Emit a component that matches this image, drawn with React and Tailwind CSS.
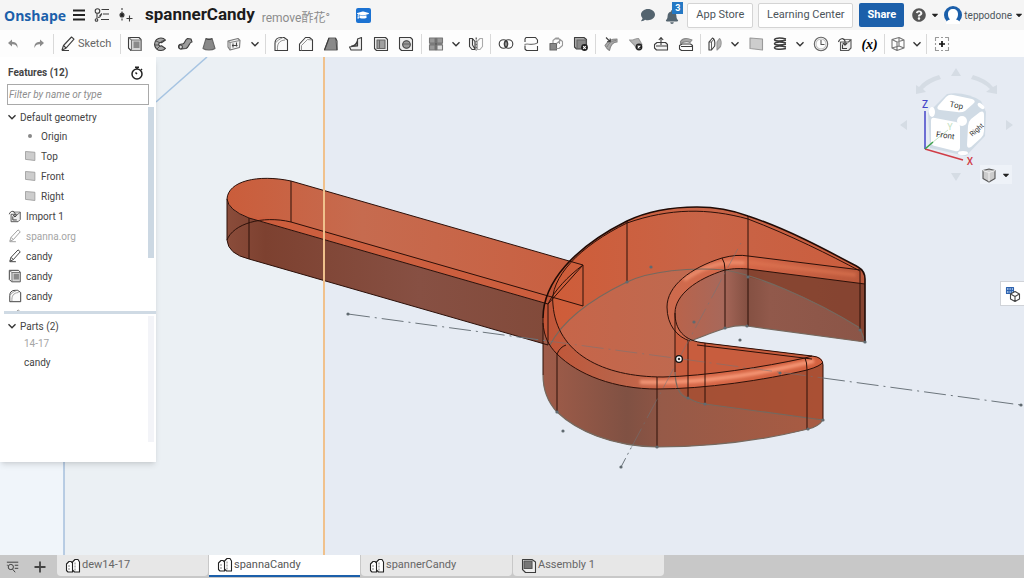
import { FaBell, FaComment, FaQuestionCircle, FaCaretDown, FaGraduationCap } from "react-icons/fa";

const Icon = ({ children, className = "size-4" }) => (
  <svg
    viewBox="0 0 16 16"
    className={`${className} shrink-0`}
    fill="none"
    stroke="#3d3d3d"
    strokeWidth="1.100"
    strokeLinejoin="round"
    aria-hidden="true"
  >
    {children}
  </svg>
);

const icons = {
  undo: (
    <path d="M7 3.500 3 7l4 3.500V8.300c2.500-.2 4.500.6 5.500 3.700.5-4-1.500-6.200-5.500-6.300Z" fill="#8b8b8b" stroke="none" />
  ),
  redo: (
    <path d="M8 3.500 12 7l-4 3.500V8.300c-2.500-.2-4.500.6-5.500 3.700C2 8 4 5.800 8 5.700Z" fill="#8b8b8b" stroke="none" />
  ),
  pencil: (
    <>
      <path d="M3.500 9.500 11.500 1l2.500 2.200-8 9L2 14Z" />
      <path d="m3.500 9.500 2.500 2.500M2 14.500h7" />
    </>
  ),
  extrude: (
    <>
      <path d="M1.500 1.500h10.500l2 2v11H4l-2.500-2.500Z" fill="#f2f2f2" />
      <path d="M4.500 4h9.500v10.500H4.500ZM1.500 1.500l3 2.500" fill="#d5d5d5" stroke="#777" />
      <path d="M6.500 5.500h6v6.500h-6Z" fill="#8a8a8a" stroke="none" />
    </>
  ),
  revolve: (
    <>
      <path d="M13.500 4A6.300 6.300 0 1 0 13.500 12.500L9.500 9.700a1.800 1.800 0 1 1 0-3Z" fill="#a8a8a8" />
      <path d="M13 4 9 5.500M4 5l3.500 1.500M2.500 9h4.500M5 13l3-3" strokeWidth=".8" />
    </>
  ),
  sweep: (
    <>
      <path d="M1.500 10.500c0-2 2-2.700 4-2.500 2.500 0 2-4 5-5.500l3.500.5 1 3c-3 0-2.500 5-6 6.500l-4.500.5c-2 0-3-1-3-2.500Z" fill="#9c9c9c" />
      <ellipse cx="3.700" cy="11" rx="1.700" ry="2" fill="#ddd" />
    </>
  ),
  loft: (
    <>
      <path d="M5 2.500h6l3 10c-3 2-9 2-12 0Z" fill="#888" stroke="#666" />
      <path d="M5 2.500c1 1.300 5 1.300 6 0" fill="#ddd" />
    </>
  ),
  thicken: (
    <>
      <path d="M2 5 12 2.500 14 4.500l-.5 7L4 14l-2-3Z" fill="#f2f2f2" stroke="#777" />
      <path d="M2 5l2 1.500L14 4.500M4 6.500V14" stroke="#888" />
      <path d="M7 7.500v4M10.500 6.500v4M6 9.500h5.500" stroke="#444" />
    </>
  ),
  fillet: (
    <>
      <path d="M2 14.500V7.500c0-3.500 2-6 6-6h3l3.500 2.500v10.500Z" fill="#fafafa" />
      <path d="M4.500 14C4 8 6 4.500 12 4M2 7.500c2-3 5-4.500 8-6" stroke="#888" strokeWidth=".9" />
    </>
  ),
  chamfer: (
    <>
      <path d="M1.500 14.500V8l6-6.500h4l3 2.500v10.500Z" fill="#fafafa" />
      <path d="m3.500 9.500 6-6 4.500.5M3.500 9.500v5" stroke="#888" strokeWidth=".9" />
    </>
  ),
  draft: (
    <>
      <path d="M6 2h6.500l1.500 12H1.500Z" fill="#8a8a8a" stroke="#666" />
      <path d="m12.500 2 1.500 3V14M6 2 1.500 14" />
    </>
  ),
  rib: (
    <>
      <path d="M13.500 1.500v12.500H3L1.500 11l8-1.500V3Z" fill="#eee" />
      <path d="M9.500 4.500V10H3.500c3 0 5-2 6-5.500Z" fill="#888" />
    </>
  ),
  shell: (
    <>
      <path d="M1.500 1.500h11l2 2v11h-11l-2-2Z" fill="#eee" />
      <path d="M4 4h8v8.500H4Z" fill="#a0a0a0" stroke="#666" />
      <path d="M6.500 4v8.500" stroke="#666" />
    </>
  ),
  hole: (
    <>
      <path d="M1.500 1.500h11l2 2v11h-11l-2-2Z" fill="#eee" />
      <circle cx="8.500" cy="8.500" r="3.800" fill="#999" />
      <path d="M5 8h7" stroke="#666" />
    </>
  ),
  pattern: (
    <>
      <path d="M1.500 2h5.500v5H1.500ZM9 2h5.500v5H9ZM1.500 9h5.500v5H1.500Z" fill="#999" stroke="#777" />
      <path d="M9 9h5.500v5H9Z" fill="#ddd" stroke="#777" />
      <path d="M8 1.500v13M1.500 8h13" />
    </>
  ),
  mirror: (
    <>
      <path d="M1.500 2.500h3l2.500 3V13.500H4l-2.500-3ZM4.500 2.500V9l2.500 4" fill="#eee" />
      <path d="M9.500 5 12 2.500h2.500v8L12 13.500H9.500Z" stroke="#aaa" />
      <path d="M8.200 1.500v13" strokeDasharray="2 1" />
    </>
  ),
  boolean: (
    <>
      <path d="M8 4.500c2 2 2 5 0 7-2-2-2-5 0-7Z" fill="#999" />
      <circle cx="5.500" cy="8" r="4.300" />
      <circle cx="10.500" cy="8" r="4.300" />
    </>
  ),
  split: (
    <>
      <path d="M2 6V3l1-1.500h9.500L14.500 4v3M2 9.500V13l1.500 1.500h11V10" />
      <path d="M1.500 8.500c4-2 6 2 13-1.500" stroke="#777" />
    </>
  ),
  transform: (
    <>
      <path d="M2 7.500h6.500V14H2Z" fill="#888" stroke="#666" />
      <path d="M7.500 3h4l3 2.500v4L11 12.500H8.500M5 7V4.500l3-2.500h3M8.500 7.500 13 4M11.500 3v5" stroke="#999" />
    </>
  ),
  deletePart: (
    <>
      <path d="M1.500 1.500h9.500l2.500 2v9.500H3.500l-2-2Z" fill="#aaa" />
      <path d="M4 4h9v8.500H4Z" fill="#888" stroke="#666" />
      <circle cx="11.500" cy="11.500" r="3.400" fill="#222" stroke="none" />
      <path d="m10.200 10.200 2.600 2.600m0-2.600-2.600 2.600" stroke="#fff" />
    </>
  ),
  modifyFillet: (
    <>
      <path d="M2 9.500C5 4.500 8 3 14 3v3c-4 0-6.500 3-7.500 8.500L4 12.500Z" fill="#aaa" stroke="#888" />
      <path d="M4 11c2-4 4-6 9-6.500" stroke="#777" strokeWidth=".8" />
      <path d="m3 1.500 4 4M7.200 2.500v3.200H4" />
    </>
  ),
  deleteFace: (
    <>
      <path d="M1.500 4c4 1 6-2 9-1.500l3.500 6-5.500 4C7 8.500 4 7.500 1.500 4Z" fill="#b3b3b3" stroke="#999" />
      <circle cx="11" cy="11" r="3.400" fill="#222" stroke="none" />
      <path d="m9.700 9.700 2.600 2.600m0-2.600-2.600 2.600" stroke="#fff" />
    </>
  ),
  moveFace: (
    <>
      <path d="M1.500 8.500 4 6.500h8.500l2 2V14H3.500l-2-2Z" fill="#f4f4f4" />
      <path d="M3 10h11.500M8 9V2M5.800 4 8 1.500 10.200 4" />
    </>
  ),
  replaceFace: (
    <>
      <path d="M2.500 5.500c3-4.500 7-3.500 11.500-1.500l-2 2.500c-3.500-2-6-1-9.500 1Z" fill="#aaa" stroke="#888" />
      <path d="M1.500 9.500 4 8h8.500l2 1.500v5H3.500l-2-1.500ZM3 10.500h11.500" />
    </>
  ),
  offset: (
    <>
      <path d="M2 6 5.500 2c2.200 1 2.700 4 2.200 8L4.500 14H2Z" fill="#fafafa" />
      <path d="M2 6h2.500v8M4.500 6 7 3" strokeWidth=".8" />
      <path d="M10 6 12.500 2.500c2 2 2 5 1 8L10 14Z" fill="#b5b5b5" stroke="#999" />
    </>
  ),
  plane: <path d="M2 2 14.500 3v11L2 12.500Z" fill="#cdcdcd" stroke="#9a9a9a" />,
  helix: (
    <path
      d="M14 3C8 1.500 2.500 2 2.500 3.700s6.500 1.500 11.500.6M14 7C8 5.500 2.500 6 2.500 7.700s6.500 1.500 11.500.6M14 11c-6-1.500-11.500-1-11.500.7s6.500 2 11.500.8"
      strokeWidth="1.500"
    />
  ),
  clock: (
    <>
      <circle cx="8" cy="8" r="6.700" stroke="#666" />
      <circle cx="8" cy="8" r="5" stroke="#aaa" strokeWidth=".8" />
      <path d="M8 4v4.500h3.500" stroke="#555" />
    </>
  ),
  derived: (
    <>
      <path d="M3.500 6h8l2.500-2.500v8.500l-2.500 2.500h-8Z" fill="#eee" stroke="#555" />
      <path d="M6 3.500h8" stroke="#777" />
      <path d="M1.500 6C2.500 2 7 1.500 8 5v3.500M5.800 7 8 9.200 10.200 7M5.500 8.500v4H10" />
    </>
  ),
  frame: (
    <path
      d="m2 3.500 7-2 5 2.500v8l-7 2.500L2 12ZM2 3.500l5 2.500 7-2M7 6v8.500M9 1.500V10l-7 2M9 10l5 2"
      stroke="#777"
    />
  ),
  add: (
    <>
      <path d="M1.500 5V1.500H5M11 1.500h3.500V5M14.500 11v3.500H11M5 14.500H1.500V11M7 1.500h2M7 14.500h2M1.500 7v2M14.500 7v2" stroke="#999" />
      <path d="M8 5v6M5 8h6" strokeWidth="1.700" stroke="#111" />
    </>
  ),
  parts: (
    <>
      <path d="M1.500 6 4 3.500h2L7.500 5v9H3l-1.500-1.500ZM7.500 4 10 1.500h3L14.500 4v10H9.500l-2-2Z" stroke="#222" fill="#fff" />
      <path d="M4 7v6M10 4.500V13" strokeDasharray="2 1" stroke="#666" strokeWidth=".8" />
    </>
  ),
  assembly: (
    <>
      <path d="M1.500 1.500h9.500l3.500 2.500v10.500H4.500l-3-3Z" fill="#eee" />
      <path d="M3 3h8v7.500H3Z" fill="#777" stroke="#555" />
    </>
  ),
};

const toolGroups = [
  { width: "w-[145px]", tools: ["extrude", "revolve", "sweep", "loft", "thicken", "more"] },
  { width: "w-[156px]", tools: ["fillet", "chamfer", "draft", "rib", "shell", "hole"] },
  { width: "w-[69px]", tools: ["pattern", "more", "mirror"] },
  { width: "w-[105px]", tools: ["boolean", "split", "transform", "deletePart"] },
  { width: "w-[105px]", tools: ["modifyFillet", "deleteFace", "moveFace", "replaceFace"] },
  { width: "w-[184px]", tools: ["offset", "more", "plane", "helix", "more", "clock", "derived", "variable"] },
  { width: "w-[42px]", tools: ["frame", "more"] },
  { width: "w-[30px]", tools: ["add"] },
];

const Chevron = ({ className = "size-2" }) => (
  <svg viewBox="0 0 8 8" className={`${className} shrink-0`} fill="none" stroke="#333" strokeWidth="1.400" aria-hidden="true">
    <path d="m.5 2.300 3.500 3.400 3.500-3.400" />
  </svg>
);

const Header = () => (
  <header className="flex h-[30px] shrink-0 items-center bg-[#f5f5f5] pl-1">
    <a href="#" className="w-[68px] font-['Open_Sans',sans-serif] text-[14px] font-bold text-[#1b5faa]">
      Onshape
    </a>
    <button aria-label="Menu" className="w-[18px]">
      <svg viewBox="0 0 14 14" className="size-3.5" stroke="#222" strokeWidth="1.800" aria-hidden="true">
        <path d="M1 2.500h12M1 7h12M1 11.500h12" />
      </svg>
    </button>
    <button aria-label="Versions" className="ml-1 w-5">
      <Icon>
        <circle cx="3.500" cy="4" r="2.300" />
        <circle cx="2.500" cy="13" r="1.300" />
        <path d="M3 6.500v5M4 10.500c3.500 0 2-2 4-4M7.500 2.500H15M9 7h6M7 12.500h8M5.500 9 8 6.500" />
      </Icon>
    </button>
    <button aria-label="Create version" className="ml-1 w-5">
      <Icon>
        <path d="M4 1v14" strokeDasharray="2 1.500" />
        <circle cx="4" cy="8" r="2" fill="#222" />
        <path d="M11.500 8.500v6M8.500 11.500h6" />
      </Icon>
    </button>
    <h1 className="ml-[7px] text-[17px] font-bold text-[#1c1c1c]">spannerCandy</h1>
    <span className="ml-[7px] pt-1.5 text-[12px] leading-4 text-[#8c8c8c]">remove酢花°</span>
    <span className="ml-[26px] flex size-[15px] items-center justify-center rounded-xs bg-[#1b72d2]">
      <FaGraduationCap className="size-3 text-white" />
    </span>
    <div className="ml-auto flex items-center text-[11px] text-[#4c555b]">
      <button aria-label="Comments">
        <FaComment className="size-3.5 text-[#54646f]" />
      </button>
      <button aria-label="Notifications" className="relative ml-2.5 mr-2">
        <FaBell className="mt-1 size-3.5 text-[#54646f]" />
        <span className="absolute -right-1 -top-1 h-3 w-[11px] bg-[#2478c4] text-[9px] font-bold leading-3 text-white">3</span>
      </button>
      <button className="h-[25px] w-[66px] rounded-xs border border-[#d4d4d4] bg-white">App Store</button>
      <button className="ml-[5px] h-[25px] w-[95px] rounded-xs border border-[#d4d4d4] bg-white">Learning Center</button>
      <button className="ml-1.5 h-6 w-[45px] rounded-xs bg-[#1b5faa] font-bold text-white">Share</button>
      <button aria-label="Help" className="ml-2 flex items-center gap-1">
        <FaQuestionCircle className="size-3.5 text-[#555]" />
        <FaCaretDown className="size-2.5 text-[#222]" />
      </button>
      <button className="ml-1 flex items-center gap-0.5 text-[10px]">
        <svg viewBox="0 0 18 18" className="size-[18px]" aria-hidden="true">
          <circle cx="9" cy="9" r="9" fill="#1b5faa" />
          <path d="M2 18c0-3 2-4 4-4.500C4.500 12 4 10 4 8c0-3 2-5 5-5s5 2 5 5c0 2-.5 4-2 5.500 2 .5 4 1.500 4 4.500Z" fill="#fff" />
        </svg>
        teppodone
        <FaCaretDown className="size-2.5 text-[#222]" />
      </button>
    </div>
  </header>
);

const Toolbar = () => (
  <div role="toolbar" className="flex h-[27px] shrink-0 items-center bg-[#fdfdfd]">
    <div className="flex w-[53px] justify-around">
      <button aria-label="Undo"><Icon>{icons.undo}</Icon></button>
      <button aria-label="Redo"><Icon>{icons.redo}</Icon></button>
    </div>
    <button className="flex h-5 w-[67px] items-center gap-0.5 border-l border-[#d9d9d9] pl-1.5 text-[11px] text-[#666]">
      <Icon>{icons.pencil}</Icon>
      <span className="pt-0.5">Sketch</span>
    </button>
    {toolGroups.map((group) => (
      <div key={group.tools[0]} className={`${group.width} flex h-5 shrink-0 items-center justify-around border-l border-[#d9d9d9] px-0.5`}>
        {group.tools.map((tool, i) => (
          <button key={i} aria-label={tool}>
            {tool === "more" && <Chevron />}
            {tool === "variable" && (
              <span className="font-['Liberation_Serif',serif] text-[14px] font-bold italic leading-4">(x)</span>
            )}
            {icons[tool] && <Icon>{icons[tool]}</Icon>}
          </button>
        ))}
      </div>
    ))}
  </div>
);

const geometry = [
  { name: "Origin", origin: true },
  { name: "Top" },
  { name: "Front" },
  { name: "Right" },
];

const features = [
  { name: "Import 1", icon: "derived" },
  { name: "spanna.org", icon: "pencil", muted: true },
  { name: "candy", icon: "pencil" },
  { name: "candy", icon: "extrude" },
  { name: "candy", icon: "fillet" },
  { name: "initSketch", icon: "pencil", muted: true },
];

const FeaturePanel = () => (
  <aside className="absolute left-0 top-0 flex h-[405px] w-[156px] flex-col bg-white text-[10px] text-[#444] shadow-md">
    <div className="flex h-[27px] shrink-0 items-center justify-between pl-2 pr-3 pt-1">
      <h2 className="font-bold">Features (12)</h2>
      <button aria-label="Regeneration times">
        <svg viewBox="0 0 14 14" className="size-3.5" fill="none" stroke="#222" strokeWidth="1.500" aria-hidden="true">
          <circle cx="7" cy="8" r="5" />
          <path d="M5 1.300h4M7 1.500V3M7 8 5.500 6.500M11 3l1 1" />
        </svg>
      </button>
    </div>
    <input
      type="text"
      aria-label="Filter features"
      placeholder="Filter by name or type"
      className="mx-[7px] h-[21px] w-[142px] shrink-0 border border-[#a9a9a9] px-px italic placeholder:text-[#8d8d8d]"
    />
    <div className="flex h-[206px] shrink-0 overflow-hidden pt-0.5">
      <ul className="flex-1 pt-px">
        <li>
          <div className="flex h-[18px] items-center gap-1 pl-2">
            <Chevron />
            Default geometry
          </div>
          <ul>
            {geometry.map((item) => (
              <li key={item.name} className="flex h-5 items-center pl-6">
                {item.origin ? (
                  <span className="ml-1 mr-[9px] size-1 rounded-full bg-[#888]" />
                ) : (
                  <Icon className="mr-[5px] size-3">{icons.plane}</Icon>
                )}
                {item.name}
              </li>
            ))}
          </ul>
        </li>
        {features.map((item, i) => (
          <li key={i} className={`flex h-5 items-center gap-1 pl-2 ${item.muted ? "text-[#a5a5a5]" : ""}`}>
            <Icon className={item.muted ? "size-3.5 opacity-50" : "size-3.5"}>{icons[item.icon]}</Icon>
            {item.name}
          </li>
        ))}
      </ul>
      <div className="mr-0.5 h-[151px] w-1.5 bg-[#ccd8e3]" />
    </div>
    <div className="ml-1 h-[3px] shrink-0 bg-[#cfdae4]" />
    <div className="mb-5 flex flex-1 pt-0.5">
      <ul className="flex-1 pt-px">
        <li className="flex h-[18px] items-center gap-1 pl-2">
          <Chevron />
          Parts (2)
        </li>
        <li className="flex h-4 items-center pl-6 text-[#a5a5a5]">14-17</li>
        <li className="flex h-[22px] items-center pl-6">candy</li>
      </ul>
      <div className="mr-0.5 w-1.5 bg-[#f3f4f8]" />
    </div>
  </aside>
);

// outline of the head, jaws included
const HEAD =
  "M543 318C543 282 575 247 627 221C650 210 672 207 697 207C715 207 732 210 748 216C790 230 830 252 858 267Q865 271 865 279V342L747 326C730 323 706 336 690 341L705 343L812 356Q823 357 823 365V420Q818 427 808 429C760 441 705 447 657 447C610 446 576 430 557 412Q543 397 543 375Z";
const INNER_TOP = "M861 270L748 256Q737 254 722 258C690 268 667 286 667 307C667 325 677 337 690 341";
const INNER_EDGE = "M865 284L748 269C736 268 731 269 725 270C696 279 675 295 675 313C675 329 683 341 705 343";
const RIM_OUTER = "M543 323C544 336 548 345 557 354C578 375 615 389 657 389C705 389 765 380 807 370Q821 366 823 362";
const RIM_INNER = "M627 223C580 246 549 278 553 305C557 353 602 377 663 377C706 376 764 367 805 358L812 356";
const FLOOR_EDGE = "M550 345C565 316 600 295 627 282C650 271 690 267 725 270C755 275 810 297 860 328L865 342";

const Wrench = () => (
  <g strokeLinejoin="round">
    <path d="M227 199C228 181 258 174 291 181L583 265L548 304L249 218Q228 210 227 199Z" fill="url(#handleTop)" />
    <path d="M249 218L548 304L583 306L300 224Q270 215 249 218Z" fill="#cd5d3c" opacity=".8" />
    <path d="M227 199Q228 210 249 218L548 304V345L249 259Q228 254 227 240Z" fill="url(#handleSide)" />

    <path d={HEAD} fill="url(#headBack)" />
    <path
      d="M550 345C565 316 600 295 627 282C650 271 690 267 725 270C696 279 675 295 675 313C675 329 683 341 705 343L812 356L805 358C764 367 706 376 663 377C602 377 562 360 550 345Z"
      fill="url(#floor)"
    />
    <path d="M690 341L812 356L805 358C764 367 720 375 675 377V330Z" fill="#c85d3e" />
    <path
      d="M865 284L748 269C736 268 731 269 725 270C696 279 675 295 675 313C675 329 683 341 690 341C706 336 730 323 747 326L865 342Z"
      fill="url(#jawWall)"
    />
    <path d="M748 269L865 284V340L860 328C820 303 780 284 748 277Z" fill="#843f2a" opacity=".75" />
    <path
      d="M861 270L748 256Q737 254 722 258C690 268 667 286 667 307C667 325 677 337 690 341C680 334 675 325 675 313C675 295 696 279 725 270C731 269 736 268 748 269L865 284V279Z"
      fill="url(#innerRim)"
    />
    <path
      d="M543 323C544 336 548 345 557 354C578 375 615 389 657 389C705 389 765 380 807 370Q821 366 823 362V420Q818 427 808 429C760 441 705 447 657 447C610 446 576 430 557 412Q543 397 543 375Z"
      fill="url(#frontWall)"
    />
    <path d="M675 388C720 387 770 379 807 370L823 362V420L705 404Q677 400 675 372Z" fill="#aa4b2d" opacity=".65" />
    <path
      d="M543 318C543 305 548 293 556 282Q551 293 553 305C557 353 602 377 663 377C706 376 764 367 805 358L812 356Q821 356 823 362Q821 366 807 370C765 380 705 389 657 389C615 389 578 375 557 354C548 345 543 336 543 318Z"
      fill="url(#rim)"
    />
    <path d="M640 382C700 384 760 374 814 361" fill="none" stroke="#ffa584" strokeWidth="4" opacity=".8" filter="url(#soften)" />
    <path d="M684 280C706 264 728 261 745 263" fill="none" stroke="#f59a78" strokeWidth="4" opacity=".7" filter="url(#soften)" />
    <path d="M745 262L856 275" fill="none" stroke="#df7753" strokeWidth="4" opacity=".6" filter="url(#soften)" />

    <g fill="none" stroke="#75695f" strokeWidth="1.200">
      <path d={FLOOR_EDGE} />
      <path d="M865 342L747 326C730 323 706 336 690 341M675 372Q676 396 688 398Q697 403 705 404L823 420Q818 427 808 429C760 441 705 447 657 447C610 446 576 430 557 412Q543 397 543 375" />
    </g>

    <g fill="none" stroke="#2c1009">
      <path d="M227 199C228 181 258 174 291 181L583 265L548 304L249 218Q228 210 227 199V240Q228 254 249 259L548 345" />
      <path d="M227 240C233 224 262 215 291 222L583 306V265C568 276 554 291 548 304V345" />
      <path d="M291 181V222M249 218V259" />
      <path d={INNER_TOP} />
      <path d={INNER_EDGE} />
      <path d={RIM_OUTER} />
      <path d={RIM_INNER} />
      <path d="M627 223C670 208 708 208 748 219C790 235 830 255 860 271V329" />
      <path d="M627 221V282M557 354V412M557 354Q560 347 566 345M657 377V447M675 313V372M688 340V398M705 343V404" />
      <path d="M722 258Q725 262 725 270V328M748 216V326M805 358Q807 362 807 370V429M697 345L812 359" />
      <path d="M543 375V318M823 420V365Q823 357 812 356L705 343" />
    </g>
    <path
      d="M543 318C543 282 575 247 627 221C650 210 672 207 697 207C715 207 732 210 748 216C790 230 830 252 858 267Q865 271 865 279V342"
      fill="none"
      stroke="#1f0b06"
      strokeWidth="1.600"
    />
  </g>
);

const sketchPoints = [
  [348, 314], [1021, 405], [621, 467], [563, 431], [740, 340], [780, 373], [651, 267], [694, 322],
  [865, 342], [860, 330], [823, 420], [808, 429], [657, 447], [557, 412], [705, 404], [688, 398],
  [627, 282], [725, 328], [747, 326], [748, 277],
];

const Viewport = () => (
  <svg
    viewBox="0 57 1024 498"
    preserveAspectRatio="xMinYMin slice"
    className="absolute inset-0 size-full"
    role="img"
    aria-label="Spanner model"
  >
    <defs>
      <linearGradient id="handleTop">
        <stop offset="0" stopColor="#ca5d3b" />
        <stop offset=".38" stopColor="#c66b4f" />
        <stop offset="1" stopColor="#c95f40" />
      </linearGradient>
      <linearGradient id="handleSide">
        <stop offset="0" stopColor="#8a4c3a" />
        <stop offset=".12" stopColor="#7d4130" />
        <stop offset=".6" stopColor="#875043" />
        <stop offset="1" stopColor="#824a3a" />
      </linearGradient>
      <linearGradient id="headBack">
        <stop offset="0" stopColor="#cf5c38" />
        <stop offset=".5" stopColor="#c86447" />
        <stop offset="1" stopColor="#cb5d3d" />
      </linearGradient>
      <linearGradient id="floor">
        <stop offset="0" stopColor="#c76549" />
        <stop offset=".5" stopColor="#bf694f" />
        <stop offset="1" stopColor="#c46045" />
      </linearGradient>
      <linearGradient id="jawWall">
        <stop offset="0" stopColor="#b9634b" />
        <stop offset=".25" stopColor="#a8685a" />
        <stop offset=".38" stopColor="#845042" />
        <stop offset=".5" stopColor="#91594b" />
        <stop offset="1" stopColor="#8b5547" />
      </linearGradient>
      <linearGradient id="innerRim">
        <stop offset="0" stopColor="#cc6a4d" />
        <stop offset=".35" stopColor="#d8694a" />
        <stop offset="1" stopColor="#b9583b" />
      </linearGradient>
      <linearGradient id="frontWall">
        <stop offset="0" stopColor="#a05c49" />
        <stop offset=".3" stopColor="#805143" />
        <stop offset=".4" stopColor="#8b5444" />
        <stop offset=".42" stopColor="#965a48" />
        <stop offset="1" stopColor="#a95b42" />
      </linearGradient>
      <linearGradient id="rim">
        <stop offset="0" stopColor="#c25537" />
        <stop offset=".25" stopColor="#b86248" />
        <stop offset=".5" stopColor="#d6694a" />
        <stop offset="1" stopColor="#d3603e" />
      </linearGradient>
      <filter id="soften" x="-20%" y="-50%" width="140%" height="200%">
        <feGaussianBlur stdDeviation="1.500" />
      </filter>
    </defs>
    <path d="M0 57H324V555H0Z" fill="#ebf0f4" />
    <path d="M0 57H64V555H0Z" fill="#f0f5fa" />
    <path d="M156 102L207 57" stroke="#a6c4e2" strokeWidth="1.500" />
    <path d="M64 57V555" stroke="#a6bfdc" strokeWidth="1.500" />
    <Wrench />
    <g fill="none" stroke="#6c757c">
      <path d="M348 314L548 341M823 378L1021 405" strokeDasharray="22 5 2 5" />
      <path d="M548 341L823 378" strokeDasharray="22 5 2 5" opacity=".5" />
      <path d="M621 467L631 448" strokeDasharray="10 4 2 4" />
      <path d="M631 448L741 243" strokeDasharray="22 5 2 5" opacity=".5" />
    </g>
    {sketchPoints.map(([x, y]) => (
      <circle key={`${x}-${y}`} cx={x} cy={y} r="1.600" fill="#606a70" />
    ))}
    <path d="M324 57V555" stroke="#f0c18c" strokeWidth="2" />
    <circle cx="679" cy="359" r="4" fill="#111" />
    <circle cx="679" cy="359" r="2" fill="#333" stroke="#fff" strokeWidth="1.400" />
  </svg>
);

const ViewCube = () => (
  <svg viewBox="898 66 120 120" className="absolute right-1.5 top-[9px] size-[120px]" role="img" aria-label="View cube">
    <g fill="#d5dce4">
      <path d="M956 68l5 8h-10ZM956 181l5-8h-10ZM900 125l7-5v10ZM1013 125l-7-5v10Z" />
      <path d="M939 75Q925 79 919 87L916 85V94L926 92L923 89Q930 82 941 79ZM973 75Q987 79 993 87L997 85V94L986 92L990 89Q983 82 971 79Z" />
    </g>
    <path d="M928 113L947 94Q965 91 981 101L986 112L985 136L966 156L930 148Z" fill="#d0dbe5" />
    <g fill="#fff">
      <path d="M938 106L946 97Q949 94 953 95L972 99Q977 101 973 104L965 111Q962 113 957 112L940 110Q936 109 938 106Z" />
      <path d="M931 121Q931 117 935 118L956 122Q960 123 960 127V148Q959 152 955 151L935 146Q931 145 931 142Z" />
      <path d="M968 126Q968 122 971 119L980 112Q984 110 984 115V131Q984 135 981 138L971 147Q967 149 967 145Z" />
      <circle cx="962" cy="121" r="5" />
      <ellipse cx="932" cy="112" rx="3" ry="5" />
      <ellipse cx="963" cy="153" rx="5" ry="2" />
      <ellipse cx="981" cy="106" rx="4" ry="2" transform="rotate(40 981 106)" />
    </g>
    <path d="M925 111V149" stroke="#4545c8" strokeWidth="1.500" />
    <path d="M925 149L963 160" stroke="#d03c46" strokeWidth="1.500" />
    <path d="M925 149L933 142" stroke="#3ba04a" strokeWidth="1.500" />
    <path d="M933 142L948 130" stroke="#c5e2c2" />
    <g className="font-['Roboto',sans-serif]" textAnchor="middle">
      <text x="925" y="108" fontSize="10" fontWeight="500" fill="#4545c8">Z</text>
      <text x="970" y="165" fontSize="10" fontWeight="500" fill="#d03c46">X</text>
      <text x="950" y="130" fontSize="9" fill="#c5e2c2">Y</text>
      <text x="945" y="138" fontSize="8" fill="#333" transform="rotate(8 945 138)">Front</text>
      <text x="956" y="108" fontSize="8" fill="#333" transform="rotate(10 956 108)">Top</text>
      <text x="977" y="132" fontSize="7" fill="#333" transform="rotate(-42 977 130)">Right</text>
    </g>
  </svg>
);

const tabs = [
  { name: "dew14-17", icon: "parts" },
  { name: "spannaCandy", icon: "parts", active: true },
  { name: "spannerCandy", icon: "parts" },
  { name: "Assembly 1", icon: "assembly" },
];

const TabBar = () => (
  <footer className="flex h-[23px] shrink-0 items-start bg-[#c8c8c8] text-[11px] text-[#666]">
    <div className="flex h-full w-[57px] items-center gap-3 pl-1.5">
      <button aria-label="Tab manager">
        <Icon className="size-3.5">
          <path d="M1 2.500h13M10 6h4M10 9.500h4M1 6h1" />
          <circle cx="5.500" cy="8" r="3" />
          <path d="m7.500 10.500 3 3.500" />
        </Icon>
      </button>
      <button aria-label="Insert tab">
        <Icon>
          <path d="M8 2.500v11M2.500 8h11" strokeWidth="1.800" stroke="#444" />
        </Icon>
      </button>
    </div>
    <nav className="flex gap-px">
      {tabs.map((tab) => (
        <a
          key={tab.name}
          href="#"
          className={`flex w-[151px] items-center gap-px pl-2 ${
            tab.active
              ? "h-[22px] border-b-2 border-[#1b5faa] bg-white text-[#555]"
              : "h-[21px] rounded-b-sm bg-[#e7e7e7]"
          }`}
        >
          <Icon>{icons[tab.icon]}</Icon>
          {tab.name}
        </a>
      ))}
    </nav>
  </footer>
);

const App = () => {
  return (
    <div className="flex h-screen flex-col overflow-hidden font-['Roboto','Noto_Sans_CJK_JP',sans-serif]">
      <Header />
      <Toolbar />
      <main className="relative flex-1 overflow-hidden bg-[#e6ebf3]">
        <Viewport />
        <FeaturePanel />
        <ViewCube />
        <button aria-label="Display style" className="absolute right-3 top-[108px] flex h-[19px] w-8 items-center justify-center gap-1 bg-[#eef2f8]">
          <Icon>
            <path d="M2 3.500 8 2l6 1.500v8L8 15l-6-3.500Z" fill="#ccc" stroke="#555" />
            <path d="M2 3.500 8 5.500v9M8 5.500l6-2" stroke="#eee" />
          </Icon>
          <FaCaretDown className="size-2.5 text-[#222]" />
        </button>
        <button aria-label="Configurations" className="absolute right-0 top-56 flex h-[25px] w-6 items-center justify-center border border-r-0 border-[#d0d3d8] bg-white">
          <Icon>
            <path d="M1.500 1.500h7v6h-7ZM1.500 4.500h7M4 1.500v6M6.300 1.500v6" stroke="#2d62ae" fill="#9dbbe3" />
            <path d="m5.500 8 4.500-2.500L14.500 8v5L10 15.500 5.500 13ZM5.500 8l4.500 2.500L14.500 8M10 10.500v5" fill="#fff" stroke="#444" />
          </Icon>
        </button>
      </main>
      <TabBar />
    </div>
  );
};

export default App;
